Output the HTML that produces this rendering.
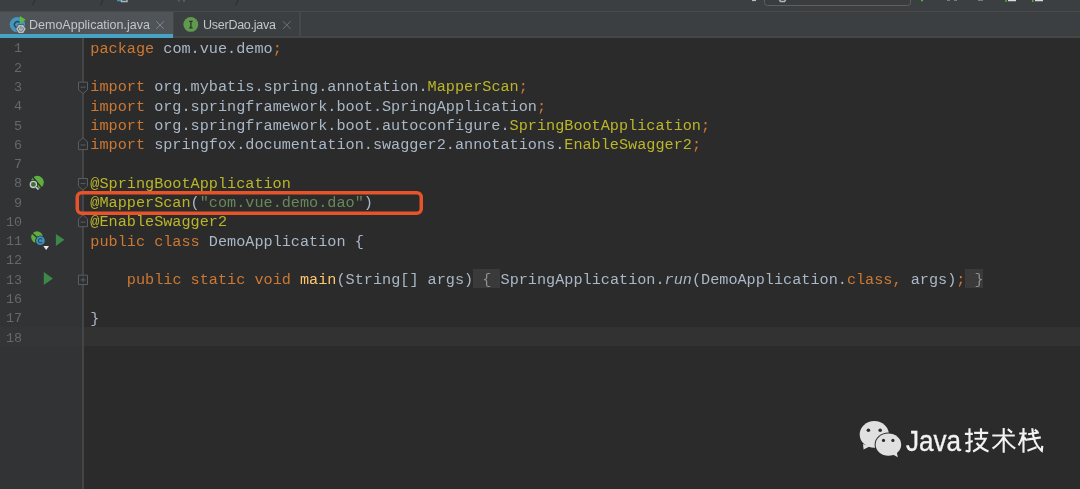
<!DOCTYPE html>
<html><head><meta charset="utf-8">
<style>
html,body{margin:0;padding:0;}
body{width:1080px;height:489px;overflow:hidden;background:#2B2B2B;position:relative;font-family:"Liberation Sans",sans-serif;}
#nav{position:absolute;left:0;top:0;width:1080px;height:10.5px;background:#3C3F41;}
#navline{position:absolute;left:0;top:10.5px;width:1080px;height:1.5px;background:#4A4A4B;}
#tabs{position:absolute;left:0;top:12px;width:1080px;height:26px;background:#3C3F41;}
#tabbot{position:absolute;left:174px;top:36px;width:906px;height:2px;background:#444746;}
#tab1{position:absolute;left:0;top:12px;width:173px;height:26px;background:#4F5458;}
#tab1u{position:absolute;left:0;top:34px;width:173px;height:3.8px;background:#47A2C3;}
#tabgap{position:absolute;left:173px;top:12px;width:1px;height:26px;background:#464646;}
#tabdiv{position:absolute;left:299px;top:12px;width:1.5px;height:24px;background:#46494B;}
.tt{position:absolute;top:16.5px;font-size:12.5px;line-height:17px;color:#C4C6C8;white-space:pre;will-change:transform;}
#gutter{position:absolute;left:0;top:38px;width:82px;height:451px;background:#313335;}
#gsep{position:absolute;left:82px;top:38px;width:2px;height:451px;background:#434547;}
#curg{position:absolute;left:0;top:326.8px;width:82px;height:19.5px;background:#333537;}
#cur{position:absolute;left:84px;top:326.8px;width:996px;height:19.5px;background:#323232;}
.ln{position:absolute;left:90.35px;height:19.28px;font-family:"Liberation Mono",monospace;font-size:15.19px;line-height:19.28px;color:#A9B7C6;white-space:pre;}
.ln i{font-style:italic;}
.fold{color:#8E8E8E;}
.fbox{position:absolute;background:#3A3A3A;}
.num{position:absolute;right:1058px;height:19.28px;font-family:"Liberation Mono",monospace;font-size:13.4px;line-height:19.28px;color:#65686B;white-space:pre;text-align:right;}
.ov{position:absolute;left:0;top:0;}
#txt{position:absolute;left:0;top:0;width:1080px;height:489px;will-change:transform;}
.fm{fill:#2E2F30;stroke:#5B5E60;stroke-width:1;}
.fl{stroke:#5B5E60;stroke-width:1;fill:none;}
#wm{position:absolute;left:906px;top:422.5px;font-size:29px;line-height:36px;color:#F2F2F2;white-space:pre;transform:scaleX(0.9);transform-origin:0 0;-webkit-text-stroke:0.35px #F2F2F2;}
</style></head><body>
<div id="nav"></div><div id="navline"></div>
<div id="tabs"></div><div id="tab1"></div><div id="tabgap"></div><div id="tabbot"></div><div id="tab1u"></div><div id="tabdiv"></div>
<div class="tt" style="left:29px">DemoApplication.java</div>
<div class="tt" style="left:203px;letter-spacing:-0.25px">UserDao.java</div>
<div id="gutter"></div><div id="curg"></div><div id="gsep"></div><div id="cur"></div>
<div id="txt">
<div class="num" style="top:39.40px">1</div>
<div class="num" style="top:58.68px">2</div>
<div class="num" style="top:77.96px">3</div>
<div class="num" style="top:97.24px">4</div>
<div class="num" style="top:116.52px">5</div>
<div class="num" style="top:135.80px">6</div>
<div class="num" style="top:155.08px">7</div>
<div class="num" style="top:174.36px">8</div>
<div class="num" style="top:193.64px">9</div>
<div class="num" style="top:212.92px">10</div>
<div class="num" style="top:232.20px">11</div>
<div class="num" style="top:251.48px">12</div>
<div class="num" style="top:270.76px">13</div>
<div class="num" style="top:290.04px">16</div>
<div class="num" style="top:309.32px">17</div>
<div class="num" style="top:328.60px">18</div>

<div class="fbox" style="left:473.1px;top:269.1px;width:26.8px;height:19px"></div><div class="fbox" style="left:965.2px;top:269.1px;width:18.1px;height:19px"></div>
<div class="ln" style="top:39.75px"><span style="color:#CC7832">package</span> com.vue.demo<span style="color:#CC7832">;</span></div>
<div class="ln" style="top:78.31px"><span style="color:#CC7832">import</span> org.mybatis.spring.annotation.<span style="color:#BBB529">MapperScan</span><span style="color:#CC7832">;</span></div>
<div class="ln" style="top:97.59px"><span style="color:#CC7832">import</span> org.springframework.boot.SpringApplication<span style="color:#CC7832">;</span></div>
<div class="ln" style="top:116.87px"><span style="color:#CC7832">import</span> org.springframework.boot.autoconfigure.<span style="color:#BBB529">SpringBootApplication</span><span style="color:#CC7832">;</span></div>
<div class="ln" style="top:136.15px"><span style="color:#CC7832">import</span> springfox.documentation.swagger2.annotations.<span style="color:#BBB529">EnableSwagger2</span><span style="color:#CC7832">;</span></div>
<div class="ln" style="top:174.71px"><span style="color:#BBB529">@SpringBootApplication</span></div>
<div class="ln" style="top:193.99px"><span style="color:#BBB529">@MapperScan</span>(<span style="color:#6A8759">"com.vue.demo.dao"</span>)</div>
<div class="ln" style="top:213.27px"><span style="color:#BBB529">@EnableSwagger2</span></div>
<div class="ln" style="top:232.55px"><span style="color:#CC7832">public class</span> DemoApplication {</div>
<div class="ln" style="top:271.11px">    <span style="color:#CC7832">public static void</span> <span style="color:#FFC66D">main</span>(String[] args)<span class="fold"> { </span>SpringApplication.<i>run</i>(DemoApplication.<span style="color:#CC7832">class</span><span style="color:#CC7832">,</span> args)<span style="color:#CC7832">;</span><span class="fold"> }</span></div>
<div class="ln" style="top:309.67px">}</div>

<div id="wm">Java</div>
</div>
<svg class="ov" width="1080" height="489" viewBox="0 0 1080 489">
<!-- nav bar bits -->
<path d="M35 0L32.6 5M103 0L100.6 5M238 0L235.6 5" stroke="#2E3032" stroke-width="1.2"/>
<path d="M117 0.5H121" stroke="#3F93BF" stroke-width="1.6"/>
<path d="M121.5 -1V1.5H127V-1" fill="none" stroke="#A9B7C0" stroke-width="1.4"/>
<path d="M179 0.3v1M184 0.3v1.3" stroke="#8d9296" stroke-width="1"/>
<rect x="764.5" y="-6" width="146" height="11.5" rx="3" fill="#3A3C3E" stroke="#5D5F61" stroke-width="1"/>
<path d="M779 -1L780.5 1.5H784.5L786 -1" fill="none" stroke="#A9BAC5" stroke-width="1.5"/>
<path d="M752 0.5H756" stroke="#B9BDC0" stroke-width="1.2"/>
<circle cx="922" cy="0.4" r="1.1" fill="#4EB52E"/>
<path d="M947 0.5h3M954 0.5h3M978 0.5h5" stroke="#777b7e" stroke-width="1"/>
<path d="M1006 0V2M1032.8 0V2" stroke="#62B543" stroke-width="1.3"/>
<path d="M1008 0.6h8M1035 0.6h8" stroke="#D8DADC" stroke-width="1.3"/>
<!-- tab 1 icon -->
<circle cx="17.4" cy="24.6" r="7.7" fill="#4596BC"/>
<path d="M19.6 22.6A3 3 0 1 0 19 27.2" fill="none" stroke="#26485A" stroke-width="1.4"/>
<path d="M19.9 16.1L25.7 19.7L19.9 23.5Z" fill="#5DBA3A"/>
<path d="M15.4 29L18.2 24.3H23.6L26.4 29L23.6 33.7H18.2Z" fill="#4F5458"/>
<path d="M16.1 29L18.6 24.9H23.2L25.7 29L23.2 33.1H18.6Z" fill="#B4BEC5"/>
<path d="M19.2 27.3A2.4 2.4 0 1 0 22.6 27.3" fill="none" stroke="#66737A" stroke-width="1"/>
<path d="M20.9 26V29.2" stroke="#66737A" stroke-width="1"/>
<!-- tab 2 icon -->
<circle cx="190.8" cy="24.4" r="7.4" fill="#609A50"/>
<path d="M189.2 21.3H192.6M190.9 21.3V27.8M189.2 27.8H192.6" stroke="#2A3526" stroke-width="1.25"/>
<!-- close X -->
<path d="M156.3 21.3L163.9 28.9M163.9 21.3L156.3 28.9" stroke="#80878B" stroke-width="1"/>
<path d="M283 21.3L290.6 28.9M290.6 21.3L283 28.9" stroke="#6E7376" stroke-width="1"/>
<!-- folds -->
<path d="M78.5 82.1H87.5V89.7L83 93.7L78.5 89.7Z" class="fm"/><path d="M80.5 87.2H85.5" class="fl"/><path d="M83 137.8L87.5 141.8V149.6H78.5V141.8Z" class="fm"/><path d="M80.5 145.0H85.5" class="fl"/><path d="M78.5 178.5H87.5V186.1L83 190.1L78.5 186.1Z" class="fm"/><path d="M80.5 183.6H85.5" class="fl"/><path d="M83 214.9L87.5 218.9V226.7H78.5V218.9Z" class="fm"/><path d="M80.5 222.1H85.5" class="fl"/><path d="M78.5 275.2H87.5V284.6H78.5Z" class="fm"/><path d="M80.5 279.9H85.5M83 277.4V282.4" class="fl"/>
<!-- gutter icons line 8 -->
<circle cx="37.3" cy="182.3" r="6.5" fill="#5FAE3F"/>
<path d="M31.5 175.5L43 189.5" stroke="#313335" stroke-width="1.4"/>
<circle cx="33.4" cy="184.4" r="3.1" fill="#3E6E2D" stroke="#313335" stroke-width="3"/>
<circle cx="33.4" cy="184.4" r="3.1" fill="#3E6E2D" stroke="#C9CED3" stroke-width="1.3"/>
<path d="M35.6 186.7L38.3 189.3" stroke="#313335" stroke-width="2.8"/>
<path d="M35.6 186.7L38.1 189.1" stroke="#C9CED3" stroke-width="1.5" stroke-linecap="round"/>
<!-- line 11 -->
<circle cx="37" cy="237.1" r="5.9" fill="#5FAE3F"/>
<path d="M31.5 232.5L43 243" stroke="#313335" stroke-width="1.3"/>
<circle cx="40.4" cy="240.7" r="5.3" fill="#313335"/>
<circle cx="40.4" cy="240.7" r="4.4" fill="#3D8FB8"/>
<path d="M42.1 239.3A2.1 2.1 0 1 0 42.1 242.1" fill="none" stroke="#22506A" stroke-width="1.1"/>
<path d="M42.6 245.6H49.7L46.15 250.5Z" fill="#313335"/>
<path d="M43.3 246.1H49L46.15 249.9Z" fill="#E8E8E8"/>
<path d="M55.9 233.9L64.4 239.8L55.9 245.9Z" fill="#3D8849"/>
<!-- line 13 -->
<path d="M43.8 272.1L52.9 278.5L43.8 284.9Z" fill="#3D8849"/>
<!-- red box -->
<rect x="77.25" y="192.75" width="344" height="20.5" rx="4.5" fill="none" stroke="#E8542A" stroke-width="3.5"/>
<!-- wechat logo -->
<g fill="#E0E0E0">
<ellipse cx="874.3" cy="434.4" rx="14.6" ry="13.3"/>
<path d="M863 444L863.6 449.6L869.5 446.5Z"/>
</g>
<ellipse cx="888.4" cy="444.6" rx="13.8" ry="12.2" fill="#2B2B2B"/>
<g fill="#E0E0E0">
<ellipse cx="888.4" cy="444.6" rx="12.8" ry="11.2"/>
<path d="M892 454L897.8 457.2L896.5 451Z"/>
</g>
<g fill="#2B2B2B">
<circle cx="868.4" cy="430.3" r="1.8"/><circle cx="880.2" cy="430.3" r="1.8"/>
<circle cx="883.5" cy="440.4" r="1.6"/><circle cx="892.9" cy="440.4" r="1.6"/>
</g>
<!-- chinese chars -->
<g stroke="#F2F2F2" stroke-width="2.15" fill="none" stroke-linecap="butt">
<!-- 技 -->
<path d="M964.9 433.8H972.8M969.5 428.3V450.6Q969.5 451.5 968.4 451.4L965.6 450.8M965.3 443.6L972.8 440.9"/>
<path d="M974.1 432.8H988.2M981 428.3V438.4M974.6 438.7H985.6Q982 447 973.1 451.5M976.6 443Q981 448.5 988.5 451.5"/>
<!-- 术 -->
<path d="M992.3 435.5H1014.8M1003.7 427.9V452.8M1007.8 429.2L1012 432.6M1003.2 437.5Q999 444.5 992.6 448.5M1004.2 437.5Q1008.5 444.5 1015.2 448.5"/>
<!-- 栈 -->
<path d="M1019.2 433.5H1026.8M1023.5 427.9V452.8M1023 435Q1021.5 441 1018.6 445.3M1024.2 437.5L1026.8 440.6"/>
<path d="M1028.1 434.3L1038.9 432.5M1027.1 439.6L1040.8 437.4M1027.4 450.8L1036.5 447.3M1032.3 428.3Q1033 444 1041.8 450.8L1042.3 445.8M1034.8 429.7L1037.6 431.8"/>
</g>
</svg>
</body></html>
